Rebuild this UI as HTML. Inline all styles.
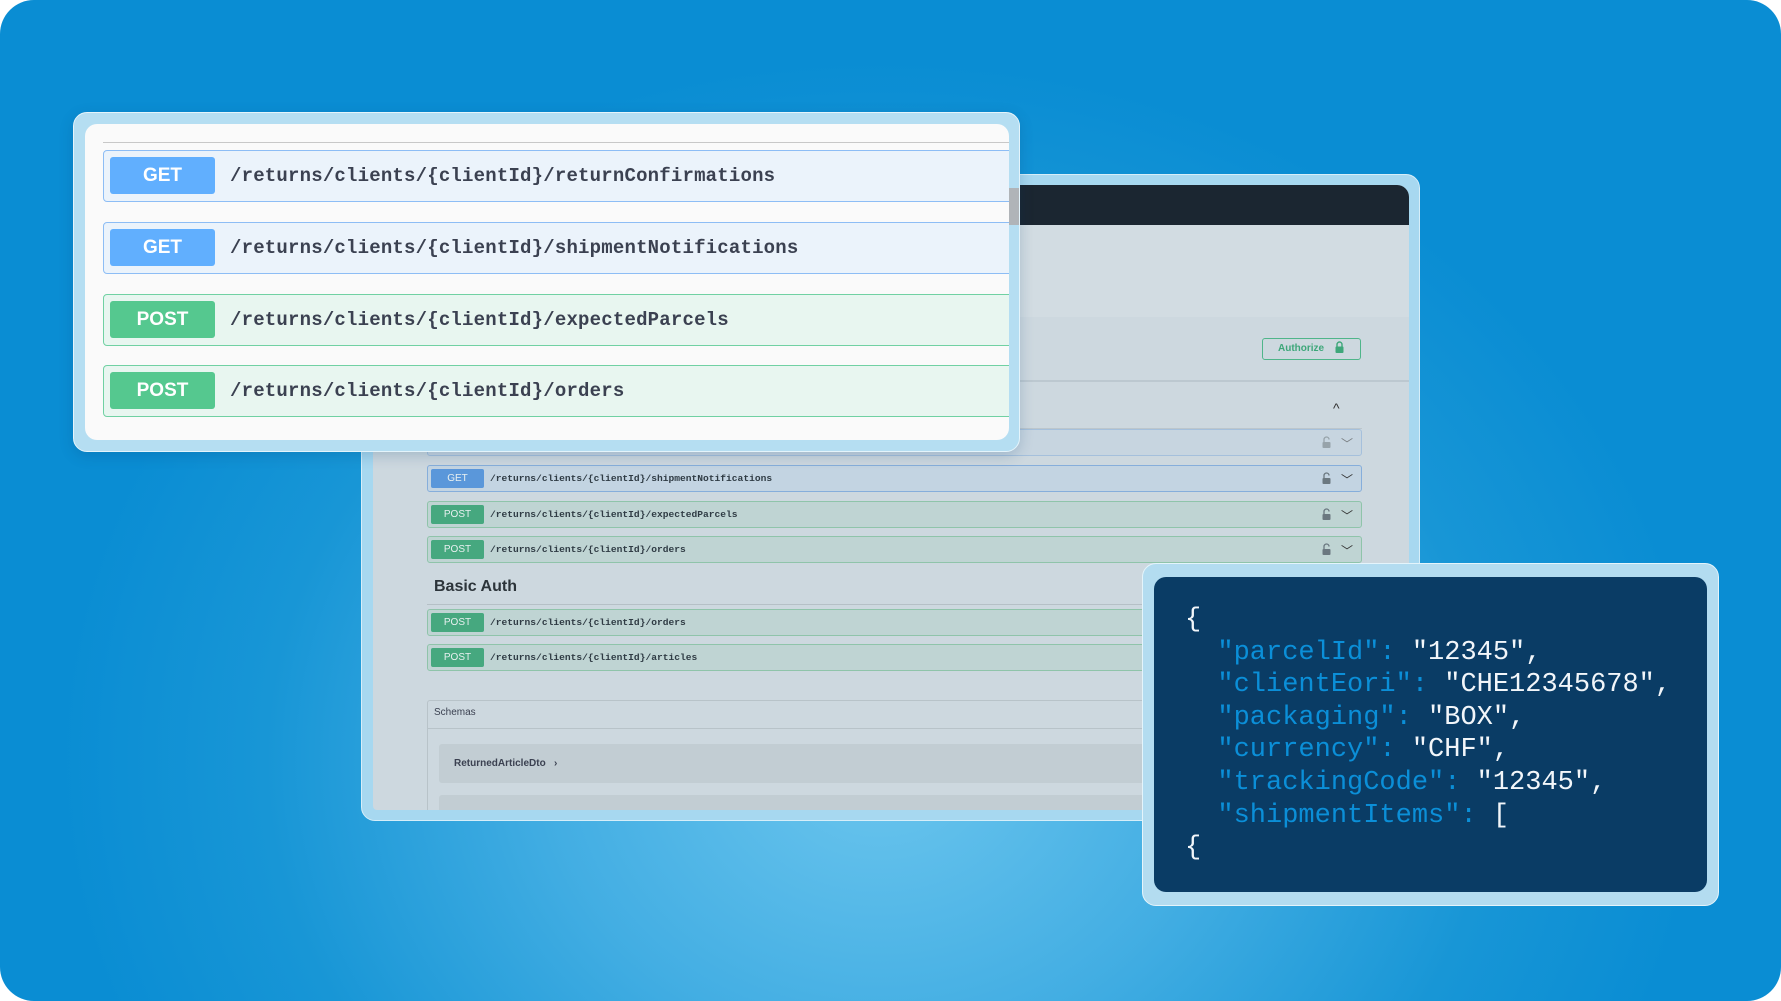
<!DOCTYPE html>
<html><head><meta charset="utf-8"><style>
*{margin:0;padding:0;box-sizing:border-box}
html,body{width:1781px;height:1001px;overflow:hidden;background:#fff}
#bg{position:absolute;left:0;top:0;width:1781px;height:1001px;border-radius:34px;
background:radial-gradient(ellipse 820px 700px at 880px 760px,#6cc6ee 0%,#43aee3 40%,#1896d6 75%,#0a8dd3 100%);overflow:hidden}
.abs{position:absolute}
.mono{font-family:"Liberation Mono","DejaVu Sans Mono",monospace}
.sans{font-family:"Liberation Sans",sans-serif}
#back{left:361px;top:174px;width:1059px;height:647px;border-radius:14px;background:#a7d8f0;border:1px solid #d6eef9}
#backin{left:11px;top:10px;width:1036px;height:625px;border-radius:12px 12px 4px 4px;background:#cdd8df;overflow:hidden}
.br{position:absolute;left:54px;width:935px;height:27px;border-radius:3px;border:1px solid}
.br .b{position:absolute;left:3px;top:3px;width:53px;height:19px;border-radius:2px;color:#e8f0f0;font:10px "Liberation Sans",sans-serif;text-align:center;line-height:19px}
.br .p{position:absolute;left:62px;top:0;line-height:25px;font:bold 9.6px/25px "Liberation Mono",monospace;color:#2f3b44}
.get{background:#c3d4e2;border-color:#86aedb}.get .b{background:#5a97da}
.post{background:#bfd4d3;border-color:#8fc4aa}.post .b{background:#46a87f}
.lk{position:absolute;right:30px;top:6px;width:9px;height:12px}
.cv{position:absolute;right:8px;top:5px;font:12px "Liberation Sans",sans-serif;color:#333}
#front{left:73px;top:112px;width:947px;height:340px;border-radius:14px;background:#b5def2;border:1px solid #e4f4fb;box-shadow:0 4px 14px rgba(0,60,110,.2)}
#frontin{left:11px;top:11px;width:924px;height:316px;border-radius:12px;background:#fafafa;overflow:hidden}
.fr{position:absolute;left:18px;width:920px;height:52px;border-radius:4px;border:1px solid}
.fr .b{position:absolute;left:6px;top:6px;width:105px;height:37px;border-radius:3px;color:#fff;font:bold 19px/37px "Liberation Sans",sans-serif;text-align:center}
.fr .p{position:absolute;left:126px;top:0;font:bold 19px/50px "Liberation Mono",monospace;color:#3b4151;letter-spacing:.2px}
.fget{background:#ebf3fb;border-color:#8dbdf5}.fget .b{background:#61affe}
.fpost{background:#e8f6f0;border-color:#70d1a3}.fpost .b{background:#55c88f}
#code{left:1142px;top:563px;width:577px;height:343px;border-radius:14px;background:#b3dcf0;border:1px solid #e4f4fb}
#codein{left:11px;top:13px;width:553px;height:315px;border-radius:12px;background:#0a3c65}
#codein pre{position:absolute;left:31px;top:27px;font:27px/32.6px "Liberation Mono","DejaVu Sans Mono",monospace;color:#f2f6fa;margin:0}
.k{color:#0b8fd8}
</style></head><body>
<div id="bg">
<div id="back" class="abs">
 <div id="backin" class="abs">
  <div class="abs" style="left:0;top:0;width:1036px;height:40px;background:#1b2631"></div>
  <div class="abs" style="left:0;top:40px;width:1036px;height:92px;background:#d2dce2"></div>
  <div class="abs" style="left:0;top:195px;width:1036px;height:2px;background:#bcc8d0"></div>
  <div class="abs" style="left:889px;top:153px;width:99px;height:22px;border:1px solid #4fb58a;border-radius:3px;font:bold 10px/20px 'Liberation Sans',sans-serif;color:#3ea77a;padding-left:15px">Authorize<svg style="margin-left:11px;vertical-align:-2px" width="9" height="12" viewBox="0 0 9 12"><path d="M2 6V3.5a2.5 2.5 0 015 0V6" fill="none" stroke="#3ea77a" stroke-width="1.4"/><rect x="0.5" y="5.5" width="8" height="6.5" rx="1" fill="#3ea77a"/></svg></div>
  <div class="abs sans" style="left:960px;top:215px;font-size:14px;color:#333">^</div>
  <div class="abs" style="left:54px;top:243px;width:935px;height:1px;background:#bcc6cc"></div>
  <div class="br get" style="top:244px;opacity:.55"><div class="b">GET</div><div class="p" style="color:#8ea0ae">/returns/clients/{clientId}/returnConfirmations</div><svg class="lk" viewBox="0 0 9 12"><path d="M2 6V3.5a2.5 2.5 0 015 0" fill="none" stroke="#6b7880" stroke-width="1.3"/><rect x="0.5" y="6" width="8" height="6" rx="1" fill="#6b7880"/></svg><div class="cv">﹀</div></div>
  <div class="br get" style="top:280px"><div class="b">GET</div><div class="p">/returns/clients/{clientId}/shipmentNotifications</div><svg class="lk" viewBox="0 0 9 12"><path d="M2 6V3.5a2.5 2.5 0 015 0" fill="none" stroke="#6b7880" stroke-width="1.3"/><rect x="0.5" y="6" width="8" height="6" rx="1" fill="#6b7880"/></svg><div class="cv">﹀</div></div>
  <div class="br post" style="top:316px"><div class="b">POST</div><div class="p">/returns/clients/{clientId}/expectedParcels</div><svg class="lk" viewBox="0 0 9 12"><path d="M2 6V3.5a2.5 2.5 0 015 0" fill="none" stroke="#6b7880" stroke-width="1.3"/><rect x="0.5" y="6" width="8" height="6" rx="1" fill="#6b7880"/></svg><div class="cv">﹀</div></div>
  <div class="br post" style="top:351px"><div class="b">POST</div><div class="p">/returns/clients/{clientId}/orders</div><svg class="lk" viewBox="0 0 9 12"><path d="M2 6V3.5a2.5 2.5 0 015 0" fill="none" stroke="#6b7880" stroke-width="1.3"/><rect x="0.5" y="6" width="8" height="6" rx="1" fill="#6b7880"/></svg><div class="cv">﹀</div></div>
  <div class="abs sans" style="left:61px;top:393px;font-size:16px;font-weight:bold;color:#2c343a">Basic Auth</div>
  <div class="abs" style="left:54px;top:419px;width:935px;height:1px;background:#b5c0c6"></div>
  <div class="br post" style="top:424px"><div class="b">POST</div><div class="p">/returns/clients/{clientId}/orders</div></div>
  <div class="br post" style="top:459px"><div class="b">POST</div><div class="p">/returns/clients/{clientId}/articles</div></div>
  <div class="abs" style="left:54px;top:515px;width:935px;height:120px;border:1px solid #b8c3c9;border-radius:3px"></div>
  <div class="abs sans" style="left:61px;top:522px;font-size:10px;color:#3b4151">Schemas</div>
  <div class="abs" style="left:54px;top:543px;width:935px;height:1px;background:#b8c3c9"></div>
  <div class="abs sans" style="left:66px;top:559px;width:910px;height:39px;background:#c2cdd3;border-radius:3px;font-size:10px;font-weight:bold;line-height:39px;padding-left:15px;color:#3b4151">ReturnedArticleDto &nbsp;&nbsp;›</div>
  <div class="abs" style="left:66px;top:610px;width:910px;height:39px;background:#c2cdd3;border-radius:3px"></div>
 </div>
</div>
<div id="front" class="abs">
 <div id="frontin" class="abs">
  <div class="abs" style="left:18px;top:18px;width:920px;height:1px;background:#c8c8c8"></div>
  <div class="fr fget" style="top:26px"><div class="b">GET</div><div class="p">/returns/clients/{clientId}/returnConfirmations</div></div>
  <div class="fr fget" style="top:98px"><div class="b">GET</div><div class="p">/returns/clients/{clientId}/shipmentNotifications</div></div>
  <div class="fr fpost" style="top:170px"><div class="b">POST</div><div class="p">/returns/clients/{clientId}/expectedParcels</div></div>
  <div class="fr fpost" style="top:241px"><div class="b">POST</div><div class="p">/returns/clients/{clientId}/orders</div></div>
 </div>
 <div class="abs" style="left:935px;top:75px;width:10px;height:37px;background:#b0b4b8"></div>
</div>
<div id="code" class="abs">
 <div id="codein" class="abs"><pre>{
  <span class="k">"parcelId":</span> "12345",
  <span class="k">"clientEori":</span> "CHE12345678",
  <span class="k">"packaging":</span> "BOX",
  <span class="k">"currency":</span> "CHF",
  <span class="k">"trackingCode":</span> "12345",
  <span class="k">"shipmentItems":</span> [
{</pre></div>
</div>
</div>
</body></html>
